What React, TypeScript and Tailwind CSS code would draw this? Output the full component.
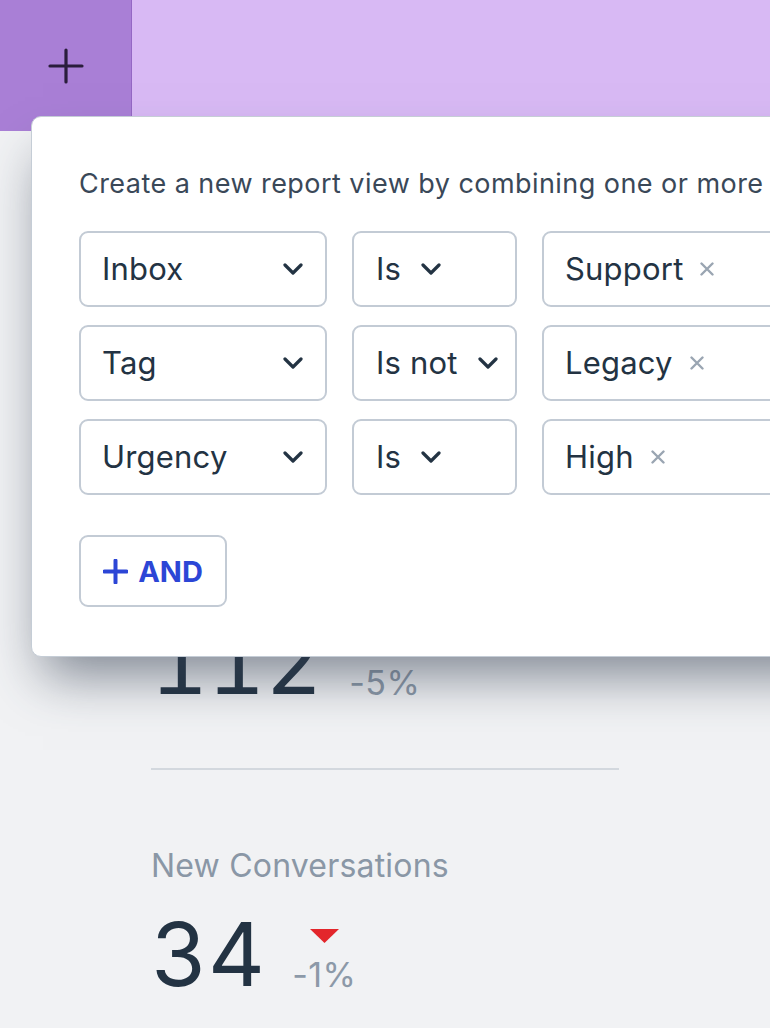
type Row = { field: string; op: string; value: string }

const ROWS: Row[] = [
  { field: 'Inbox',   op: 'Is',     value: 'Support' },
  { field: 'Tag',     op: 'Is not', value: 'Legacy'  },
  { field: 'Urgency', op: 'Is',     value: 'High'    },
]

/* ── metric block (the first one sits behind the popover, its label hidden) ── */
function Metric({ label, value, change }: { label?: string; value: string; change: string }) {
  return (
    <div>
      <div className="h-[36px] text-[32px] leading-[36px] tracking-[0.2px] text-[#8a97a6]">{label}</div>
      <div className="mt-[37px] flex items-end">
        <span className="text-[88px] leading-[66px] text-[#233343] tabular-nums">{value}</span>
        <div className="ml-[27px] flex flex-col items-center">
          <svg width="29" height="14" viewBox="0 0 29 14" className="mb-[20px]">
            <path d="M0 0 H29 L14.5 14 Z" fill="#e3262b" />
          </svg>
          <span className="text-[34px] leading-[24px] tracking-[0.5px] text-[#8c99a8]">{change}</span>
        </div>
      </div>
    </div>
  )
}

function Chevron() {
  return (
    <svg width="20" height="12" viewBox="0 0 20 12" className="shrink-0">
      <path d="M2 2 L10 10 L18 2" fill="none" stroke="#233343" strokeWidth="3.2" strokeLinecap="round" strokeLinejoin="round" />
    </svg>
  )
}

const box = 'h-[76px] shrink-0 border-2 border-[#c3cbd5] rounded-[9px] flex items-center bg-white'
const label = 'text-[31px] tracking-[0.2px] text-[#233343] whitespace-nowrap'

export default function App() {
  return (
    <div
      className="relative w-[770px] h-[1028px] overflow-hidden bg-[#f1f2f4]"
      style={{ fontFamily: 'Inter, "Noto Sans", sans-serif' }}
    >
      {/* Top bar */}
      <header className="flex h-[131px]">
        <div className="w-[132px] bg-[#a97fd6] border-r border-[#9467c4] flex items-center justify-center">
          <svg width="36" height="36" viewBox="0 0 36 36">
            <path d="M18 2 V34 M2 18 H34" stroke="#2a1d3c" strokeWidth="3.2" strokeLinecap="round" />
          </svg>
        </div>
        <div className="flex-1 bg-[#d8b9f4]" />
      </header>

      {/* Stats */}
      <main className="pl-[151px] pt-[425px]">
        <Metric value="112" change="-5%" />
        <div className="w-[468px] h-[2px] bg-[#d3d8de] mt-[73px]" />
        <div className="mt-[78px]">
          <Metric label="New Conversations" value="34" change="-1%" />
        </div>
      </main>

      {/* Filter popover */}
      <div className="absolute left-[31px] top-[116px] w-[820px] bg-white border border-[#c5cdd6] rounded-[10px] shadow-[0_30px_50px_-12px_rgba(50,62,80,0.6)] pl-[47px] pt-[51px] pb-[49px]">
        <p className="text-[27px] leading-[32px] tracking-[0.45px] text-[#3a4858] whitespace-nowrap">
          Create a new report view by combining one or more
        </p>

        <div className="mt-[31px] flex flex-col gap-[18px]">
          {ROWS.map((r) => (
            <div key={r.field} className="flex gap-[25px]">
              <div className={`${box} w-[248px] justify-between pl-[21px] pr-[22px]`}>
                <span className={label}>{r.field}</span>
                <Chevron />
              </div>
              <div className={`${box} w-[165px] gap-[20px] pl-[22px]`}>
                <span className={label}>{r.op}</span>
                <Chevron />
              </div>
              <div className={`${box} w-[300px] gap-[17px] pl-[21px]`}>
                <span className={label}>{r.value}</span>
                <svg width="14" height="14" viewBox="0 0 14 14">
                  <path d="M1.5 1.5 L12.5 12.5 M12.5 1.5 L1.5 12.5" stroke="#9aa5b2" strokeWidth="2.4" strokeLinecap="round" />
                </svg>
              </div>
            </div>
          ))}
        </div>

        <button className="mt-[40px] w-[148px] h-[72px] border-2 border-[#c3cbd5] rounded-[9px] flex items-center justify-center gap-[10px] text-[#2c46d6] bg-white">
          <svg width="25" height="25" viewBox="0 0 25 25">
            <path d="M12.5 1.5 V23.5 M1.5 12.5 H23.5" stroke="#2c46d6" strokeWidth="4" strokeLinecap="round" />
          </svg>
          <span className="text-[29px] font-bold leading-none">AND</span>
        </button>
      </div>
    </div>
  )
}
